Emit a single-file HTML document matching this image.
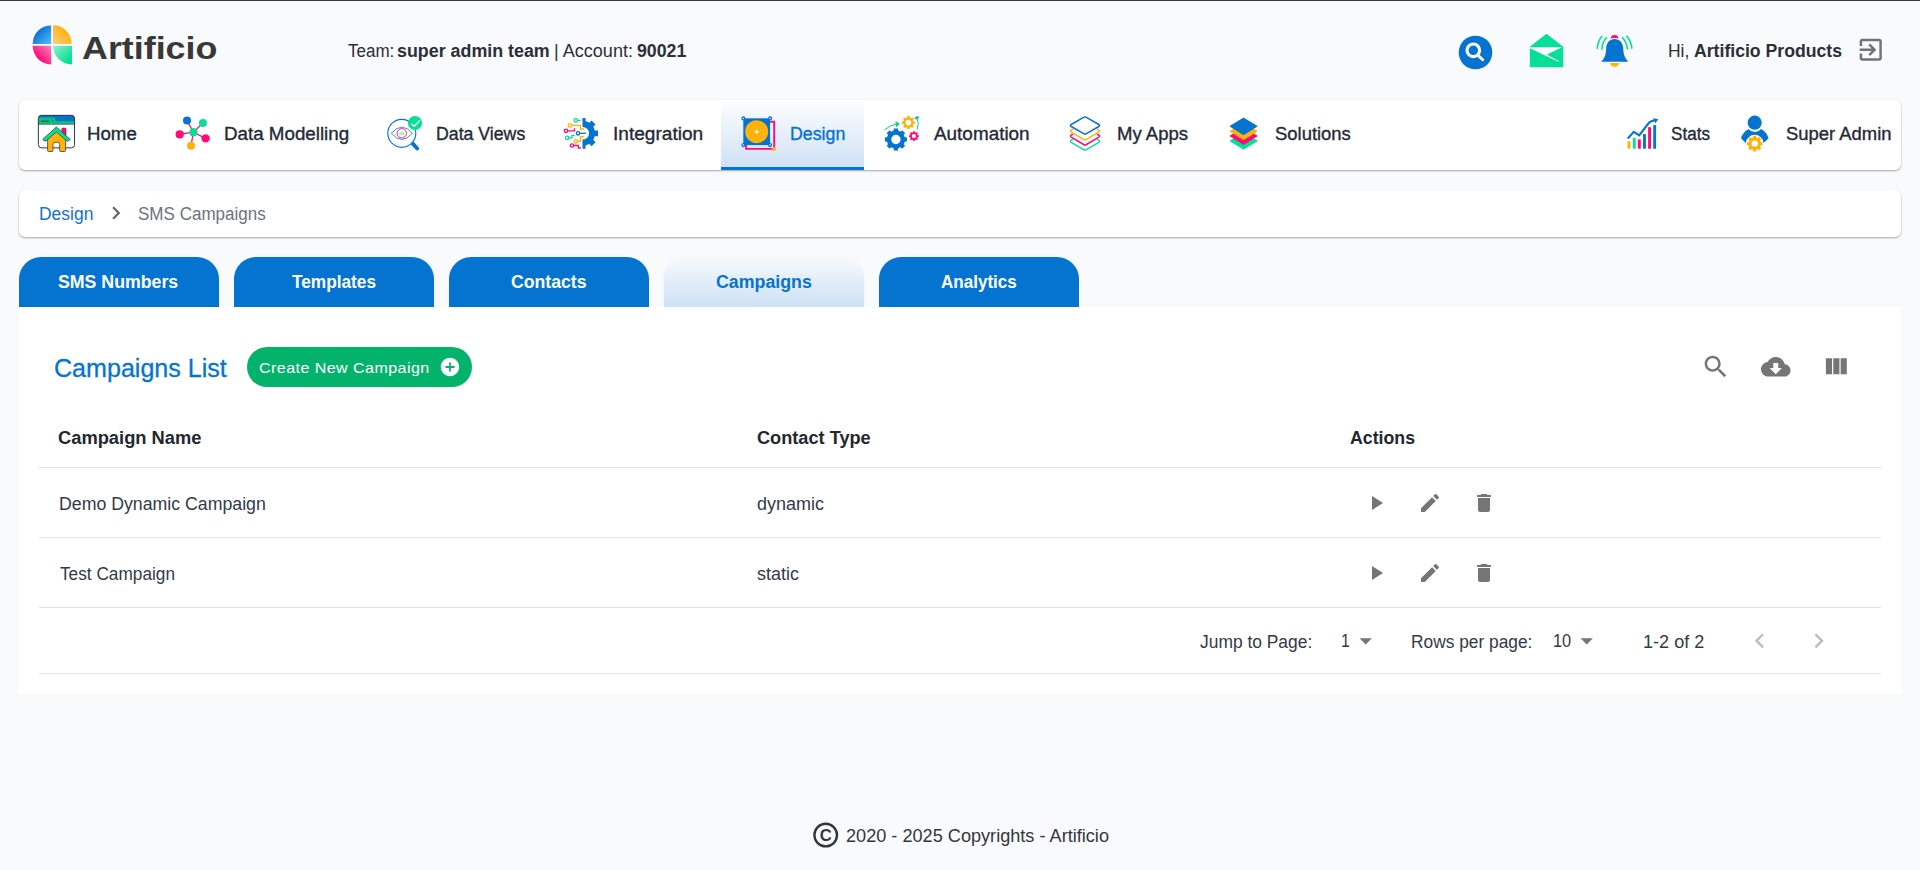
<!DOCTYPE html>
<html lang="en">
<head>
<meta charset="utf-8">
<title>Artificio - SMS Campaigns</title>
<style>
*{box-sizing:border-box;margin:0;padding:0}
html,body{width:1920px;height:870px;overflow:hidden}
body{background:#f9fafc;font-family:"Liberation Sans",sans-serif;color:#262b33;position:relative}
.topline{position:absolute;left:0;top:0;width:1920px;height:1px;background:#3a3a3a}
.t{position:absolute;white-space:nowrap;line-height:1;transform-origin:0 0}
.ic{position:absolute;overflow:visible}
.nav{position:absolute;left:19px;top:100px;width:1882px;height:70px;background:#fff;border-radius:6px;box-shadow:0 1px 2px rgba(50,50,60,.42)}
.nav .act{position:absolute;left:702px;top:0;width:143px;height:70px;background:linear-gradient(#fdfeff,#cfe1f4);border-bottom:3px solid #0474d0}
.bc{position:absolute;left:19px;top:190px;width:1882px;height:47px;background:#fff;border-radius:6px;box-shadow:0 1px 2px rgba(50,50,60,.42)}
.tab{position:absolute;top:257px;width:200px;height:50px;background:#0474d0;border-radius:22px 22px 0 0}
.tab.on{background:linear-gradient(#f7f9fc,#cde1f5);box-shadow:0 0 3px rgba(0,0,0,.05)}
.card{position:absolute;left:19px;top:307px;width:1882px;height:387px;background:#fff}
.hr{position:absolute;left:39px;width:1842px;height:1px;background:#e0e0e0}
.btn{position:absolute;left:247px;top:347px;width:225px;height:40px;border-radius:20px;background:#03b36c}
</style>
</head>
<body>
<div class="topline"></div>

<header>
<div class="t" id="brand" style="left:81.94px;top:31.66px;font-size:32px;color:#383838;font-weight:700;transform:scaleX(1.1201)">Artificio</div>
<div class="t" id="team1" style="left:348.00px;top:41.76px;font-size:18px;color:#2a2f38;transform:scaleX(0.9447)">Team:</div>
<div class="t" id="team2" style="left:396.82px;top:41.76px;font-size:18px;color:#2a2f38;font-weight:700;transform:scaleX(0.9914)">super admin team</div>
<div class="t" id="team3" style="left:553.99px;top:41.76px;font-size:18px;color:#2a2f38;transform:scaleX(1.0033)">| Account:</div>
<div class="t" id="team4" style="left:637.00px;top:41.76px;font-size:18px;color:#2a2f38;font-weight:700;transform:scaleX(0.9848)">90021</div>
<div class="t" id="hi1" style="left:1667.83px;top:41.56px;font-size:18px;color:#2a2f38;transform:scaleX(0.9688)">Hi,</div>
<div class="t" id="hi2" style="left:1693.82px;top:41.56px;font-size:18px;color:#2a2f38;font-weight:700;transform:scaleX(0.9801)">Artificio Products</div>
<svg class="ic" style="left:32px;top:24px" width="41" height="42" viewBox="32 24 41 42" >
<defs>
<linearGradient id="lg1" x1="0" y1="0" x2="1" y2="1"><stop offset=".25" stop-color="#0a6fd0"/><stop offset="1" stop-color="#4fc0f8"/></linearGradient>
<linearGradient id="lg2" x1="0" y1="1" x2="1" y2="0"><stop offset="0" stop-color="#f8cc85"/><stop offset=".7" stop-color="#ffb30a"/></linearGradient>
<linearGradient id="lg3" x1="1" y1="0" x2="0" y2="1"><stop offset="0" stop-color="#ff86bb"/><stop offset=".7" stop-color="#ff0a78"/></linearGradient>
<linearGradient id="lg4" x1="0" y1="0" x2="1" y2="1"><stop offset="0" stop-color="#93eed0"/><stop offset=".8" stop-color="#06e096"/></linearGradient>
</defs>
<path fill="url(#lg1)" d="M51.100 43.900V25.400A18.400 18.400 0 0 0 32.700 43.900Z"/>
<path fill="url(#lg2)" d="M53 43.900V25.200A18.700 18.700 0 0 1 71.700 43.900Z"/>
<path fill="url(#lg3)" d="M51.100 45.800H32.700A18.600 18.600 0 0 0 51.100 64.400Z"/>
<path fill="url(#lg4)" d="M53 45.800H72V64.500A19 19 0 0 1 53 45.800Z"/>
</svg>
<svg class="ic" style="left:1458px;top:35px" width="36" height="36" viewBox="1458 35 36 36" >
<circle cx="1475.500" cy="52.500" r="16.800" fill="#0474d0"/>
<circle cx="1473.300" cy="50.300" r="6.300" fill="none" stroke="#fff" stroke-width="3.100"/>
<path d="M1478.300 55.600L1482.700 59.700" stroke="#fff" stroke-width="2.900" stroke-linecap="round"/>
</svg>
<svg class="ic" style="left:1528px;top:32px" width="38" height="37" viewBox="1528 32 38 37" >
<path fill="#06e096" d="M1529.850 46.650L1546.500 33.700L1563.200 46.650V67.200H1529.850Z"/>
<path fill="#f9fafc" d="M1529.850 47.150H1562L1547 54.550L1559 61.300L1558.300 61.700L1529.850 48.200Z"/>
</svg>
<svg class="ic" style="left:1595px;top:33px" width="40" height="36" viewBox="1595 33 40 36" >
<circle cx="1614.600" cy="38.800" r="3.900" fill="#ff0a78"/>
<path fill="#f9fafc" d="M1608 39.600C1612 37.600 1617.500 37.600 1621.500 39.600V43H1608Z"/>
<path fill="#0474d0" d="M1614.600 39.100C1619.500 39.100 1623.100 42.800 1623.200 48.500C1623.300 54.500 1625 58.500 1628.400 61.800H1601.200C1604.500 58.500 1606.100 54.500 1606.200 48.500C1606.300 42.800 1609.700 39.100 1614.600 39.100Z"/>
<path fill="#ffb30a" d="M1609.800 63.100H1619.450C1618.800 65.500 1616.800 66.800 1614.600 66.800C1612.400 66.800 1610.500 65.500 1609.800 63.100Z"/>
<g fill="none" stroke="#06e096" stroke-width="1.600" stroke-linecap="round">
<path d="M1601.750 36.400Q1597.600 41.500 1597.300 48.200"/>
<path d="M1606.400 37.800Q1602.200 42.500 1601.900 49.300"/>
<path d="M1622.400 37.500Q1626.900 42.500 1627.350 49.050"/>
<path d="M1626.850 36.200Q1631.300 41.500 1631.800 48.200"/>
</g>
</svg>
<svg class="ic" style="left:1856.25px;top:35.10px" width="29.5" height="29.5" viewBox="0 0 24 24"><path fill="#737373" d="M10.090 15.590L11.500 17l5-5-5-5-1.410 1.410L12.670 11H3v2h9.670l-2.580 2.590zM19 3H5c-1.110 0-2 .9-2 2v4h2V5h14v14H5v-4H3v4c0 1.100.890 2 2 2h14c1.100 0 2-.9 2-2V5c0-1.100-.9-2-2-2z"/></svg>
</header>

<nav>
<div class="nav"><div class="act"></div></div>
<div class="t" id="n1" style="left:86.95px;top:124.51px;font-size:18px;color:#232a36;-webkit-text-stroke:0.35px #232a36;transform:scaleX(1.0373)">Home</div>
<div class="t" id="n2" style="left:223.94px;top:124.51px;font-size:18px;color:#232a36;-webkit-text-stroke:0.35px #232a36;transform:scaleX(1.0424)">Data Modelling</div>
<div class="t" id="n3" style="left:435.61px;top:124.51px;font-size:18px;color:#232a36;-webkit-text-stroke:0.35px #232a36;transform:scaleX(0.9837)">Data Views</div>
<div class="t" id="n4" style="left:612.92px;top:124.51px;font-size:18px;color:#232a36;-webkit-text-stroke:0.35px #232a36;transform:scaleX(1.0602)">Integration</div>
<div class="t" id="n5" style="left:790.01px;top:124.51px;font-size:18px;color:#0474d0;-webkit-text-stroke:0.35px #0474d0;transform:scaleX(0.9865)">Design</div>
<div class="t" id="n6" style="left:933.99px;top:124.51px;font-size:18px;color:#232a36;-webkit-text-stroke:0.35px #232a36;transform:scaleX(1.0501)">Automation</div>
<div class="t" id="n7" style="left:1116.95px;top:124.51px;font-size:18px;color:#232a36;-webkit-text-stroke:0.35px #232a36;transform:scaleX(1.0301)">My Apps</div>
<div class="t" id="n8" style="left:1274.99px;top:124.51px;font-size:18px;color:#232a36;-webkit-text-stroke:0.35px #232a36;transform:scaleX(1.0239)">Solutions</div>
<div class="t" id="n9" style="left:1671.05px;top:124.51px;font-size:18px;color:#232a36;-webkit-text-stroke:0.35px #232a36;transform:scaleX(0.9500)">Stats</div>
<div class="t" id="n10" style="left:1785.97px;top:124.51px;font-size:18px;color:#232a36;-webkit-text-stroke:0.35px #232a36;transform:scaleX(1.0237)">Super Admin</div>
<svg class="ic" style="left:37px;top:114px" width="39" height="39" viewBox="37 114 39 39" >
<defs><clipPath id="hc"><rect x="38.350" y="115.350" width="36.200" height="32.500" rx="3.200"/></clipPath></defs>
<rect x="38.350" y="115.350" width="36.200" height="32.500" rx="3.200" fill="#fff"/>
<g clip-path="url(#hc)">
<rect x="38" y="115" width="37" height="9.200" fill="#05c47e"/>
<path fill="#0474d0" d="M38 115H75V121.300H56L54.500 117.400H38Z"/>
<rect x="38" y="123.900" width="37" height=".6" fill="#3b3b4f"/>
<rect x="41" y="120.700" width="8" height="1" fill="#2d3a4a"/>
<path d="M51.500 119.500l1.800 1.800" stroke="#2d3a4a" stroke-width=".9"/>
<circle cx="65.400" cy="118.500" r=".55" fill="#2d3a4a"/><circle cx="68.100" cy="118.500" r=".55" fill="#2d3a4a"/><circle cx="70.700" cy="118.500" r=".55" fill="#2d3a4a"/>
</g>
<rect x="38.350" y="115.350" width="36.200" height="32.500" rx="3.200" fill="none" stroke="#33344a" stroke-width="1"/>
<path fill="#ff0a78" stroke="#4a2a3a" stroke-width=".6" d="M61.800 133V129.200Q61.800 128.100 62.900 128.100H64.900Q66 128.100 66 129.200V136.500Z"/>
<path fill="#ffb30a" stroke="#4a3a2a" stroke-width=".8" d="M47.600 138.500L56.400 130.300L65.600 138.500V150.500Q65.600 151.500 64.600 151.500H60.600Q59.600 151.500 59.600 150.500V144.300Q59.600 142.300 57.600 142.300H55Q53 142.300 53 144.300V150.500Q53 151.500 52 151.500H48.600Q47.600 151.500 47.600 150.500Z"/>
<path fill="#06e096" stroke="#2f4a45" stroke-width=".8" stroke-linejoin="round" d="M56.400 127L70 139.300L68.600 141H66.800L56.400 131.900L46 141H44.200L42.800 139.300Z"/>
</svg>
<svg class="ic" style="left:175px;top:115px" width="36" height="36" viewBox="175 115 36 36" >
<g stroke="#ff0a78" stroke-width="1.250">
<path d="M193.400 132.200L187 120.400M193.400 132.200L202.900 122.900M193.400 132.200L179.700 134.400M193.400 132.200L205.600 138.400M193.400 132.200L191 145.800"/>
</g>
<circle cx="187" cy="120.400" r="4" fill="#0474d0"/>
<circle cx="202.900" cy="122.900" r="4" fill="#06e096"/>
<circle cx="179.700" cy="134.400" r="4.100" fill="#ff0a78"/>
<circle cx="205.600" cy="138.400" r="4.200" fill="#ff0a78"/>
<circle cx="191" cy="145.800" r="4" fill="#ffb30a"/>
<circle cx="193.400" cy="132.200" r="4.200" fill="#06e096"/>
</svg>
<svg class="ic" style="left:386px;top:115px" width="38" height="37" viewBox="386 115 38 37" >
<path d="M412.300 143.100L417.200 148.500" stroke="#0474d0" stroke-width="3.800" stroke-linecap="round"/>
<circle cx="401.800" cy="133.300" r="14" fill="#fff" stroke="#0474d0" stroke-width="1.150"/>
<path d="M391.300 133.300Q401.800 121 412.400 133.300Q401.800 145.600 391.300 133.300Z" fill="none" stroke="#0474d0" stroke-width=".8"/>
<circle cx="401.800" cy="133.300" r="4.700" fill="none" stroke="#ff0a78" stroke-width=".9"/>
<path d="M400 135.300v-2.400M401.800 135.300v-3.600" stroke="#06e096" stroke-width=".9" opacity=".8"/>
<path d="M403.600 135.300v-3" stroke="#ffb30a" stroke-width=".9"/>
<circle cx="415" cy="123.100" r="7.100" fill="#06e096"/>
<path d="M411.500 123.900L414.300 126.200L419.700 120.500" fill="none" stroke="#fff" stroke-width="1.400"/>
</svg>
<svg class="ic" style="left:563px;top:116px" width="37" height="35" viewBox="563 116 37 35" >
<defs><clipPath id="ig"><rect x="582.500" y="116" width="20" height="35"/></clipPath></defs>
<g clip-path="url(#ig)"><path fill="#0474d0" fill-rule="evenodd" d="M594.76 130.41L598.04 130.45L598.04 136.15L594.76 136.19A12.4 12.4 0 0 1 593.27 139.78L595.56 142.13L591.53 146.16L589.18 143.87A12.4 12.4 0 0 1 585.59 145.36L585.55 148.64L579.85 148.64L579.81 145.36A12.4 12.4 0 0 1 576.22 143.87L573.87 146.16L569.84 142.13L572.13 139.78A12.4 12.4 0 0 1 570.64 136.19L567.36 136.15L567.36 130.45L570.64 130.41A12.4 12.4 0 0 1 572.13 126.82L569.84 124.47L573.87 120.44L576.22 122.73A12.4 12.4 0 0 1 579.81 121.24L579.85 117.96L585.55 117.96L585.59 121.24A12.4 12.4 0 0 1 589.18 122.73L591.53 120.44L595.56 124.47L593.27 126.82A12.4 12.4 0 0 1 594.76 130.41ZM576.400 133.300a6.300 6.300 0 1 0 12.600 0a6.300 6.300 0 1 0 -12.600 0Z"/></g>
<g fill="none" stroke-width="1.300">
<g stroke="#06e096"><circle cx="575.800" cy="120.400" r="1.700"/><path d="M577.500 120.400H580.800"/></g>
<g stroke="#ffb30a"><circle cx="569.800" cy="125.400" r="1.700"/><path d="M571.500 125.400H580.500V129H583.900"/></g>
<g stroke="#ff0a78"><circle cx="566" cy="130.800" r="1.700"/><path d="M567.700 130.800H574.500V128.200"/></g>
<g stroke="#0474d0"><circle cx="578" cy="133.300" r="1.700"/><path d="M579.700 133.300H585.900"/></g>
<g stroke="#06e096"><circle cx="567.200" cy="137.900" r="1.700"/><path d="M568.900 137.900H572V135.300H574.700"/></g>
<g stroke="#ffb30a"><circle cx="575.800" cy="141.300" r="1.700"/><path d="M577.500 141.300H580.500V136.700H583.900"/></g>
<g stroke="#ff0a78"><circle cx="572" cy="145.500" r="1.700"/><path d="M573.700 145.500H578.300V148H580.900"/></g>
</g>
</svg>
<svg class="ic" style="left:740px;top:116px" width="37" height="36" viewBox="740 116 37 36" >
<path d="M770.100 121.750H774.200V148.900H746.100V145.100" fill="none" stroke="#ff0a78" stroke-width="1.900"/>
<rect x="743.300" y="118.300" width="26.800" height="26.800" fill="#0474d0"/>
<circle cx="756.700" cy="131.700" r="11.500" fill="#ffb30a"/>
<path d="M754.400 131.700H759M756.700 129.400V134" stroke="#fff" stroke-width="1.100"/>
<g fill="#fff" stroke="#0474d0" stroke-width="1.300"><circle cx="743.400" cy="118.400" r="1.400"/><circle cx="770.100" cy="118.400" r="1.400"/><circle cx="743.400" cy="145.100" r="1.400"/><circle cx="770.100" cy="145.100" r="1.400"/></g>
<circle cx="773.900" cy="148.900" r="2" fill="#ffb30a"/>
</svg>
<svg class="ic" style="left:883px;top:115px" width="38" height="37" viewBox="883 115 38 37" >
<path fill="#0474d0" fill-rule="evenodd" d="M904.73 137.26L906.90 137.34L906.90 141.56L904.73 141.64A9.1 9.1 0 0 1 903.70 144.14L905.17 145.73L902.18 148.72L900.59 147.25A9.1 9.1 0 0 1 898.09 148.28L898.01 150.45L893.79 150.45L893.71 148.28A9.1 9.1 0 0 1 891.21 147.25L889.62 148.72L886.63 145.73L888.10 144.14A9.1 9.1 0 0 1 887.07 141.64L884.90 141.56L884.90 137.34L887.07 137.26A9.1 9.1 0 0 1 888.10 134.76L886.63 133.17L889.62 130.18L891.21 131.65A9.1 9.1 0 0 1 893.71 130.62L893.79 128.45L898.01 128.45L898.09 130.62A9.1 9.1 0 0 1 900.59 131.65L902.18 130.18L905.17 133.17L903.70 134.76A9.1 9.1 0 0 1 904.73 137.26ZM891.20 139.45a4.7 4.7 0 1 0 9.4 0a4.7 4.7 0 1 0 -9.4 0Z"/>
<path fill="#ffb30a" fill-rule="evenodd" d="M913.46 121.39L914.89 121.39L914.89 123.81L913.46 123.81A5.2 5.2 0 0 1 912.83 125.32L913.84 126.34L912.14 128.04L911.12 127.03A5.2 5.2 0 0 1 909.61 127.66L909.61 129.09L907.19 129.09L907.19 127.66A5.2 5.2 0 0 1 905.68 127.03L904.66 128.04L902.96 126.34L903.97 125.32A5.2 5.2 0 0 1 903.34 123.81L901.91 123.81L901.91 121.39L903.34 121.39A5.2 5.2 0 0 1 903.97 119.88L902.96 118.86L904.66 117.16L905.68 118.17A5.2 5.2 0 0 1 907.19 117.54L907.19 116.11L909.61 116.11L909.61 117.54A5.2 5.2 0 0 1 911.12 118.17L912.14 117.16L913.84 118.86L912.83 119.88A5.2 5.2 0 0 1 913.46 121.39ZM905.60 122.60a2.8 2.8 0 1 0 5.6 0a2.8 2.8 0 1 0 -5.6 0Z"/>
<path fill="#ff0a78" fill-rule="evenodd" d="M917.69 135.19L918.82 135.22L918.82 136.98L917.69 137.01A3.9 3.9 0 0 1 917.23 138.14L918.00 138.96L916.76 140.20L915.94 139.43A3.9 3.9 0 0 1 914.81 139.89L914.78 141.02L913.02 141.02L912.99 139.89A3.9 3.9 0 0 1 911.86 139.43L911.04 140.20L909.80 138.96L910.57 138.14A3.9 3.9 0 0 1 910.11 137.01L908.98 136.98L908.98 135.22L910.11 135.19A3.9 3.9 0 0 1 910.57 134.06L909.80 133.24L911.04 132.00L911.86 132.77A3.9 3.9 0 0 1 912.99 132.31L913.02 131.18L914.78 131.18L914.81 132.31A3.9 3.9 0 0 1 915.94 132.77L916.76 132.00L918.00 133.24L917.23 134.06A3.9 3.9 0 0 1 917.69 135.19ZM911.80 136.10a2.1 2.1 0 1 0 4.2 0a2.1 2.1 0 1 0 -4.2 0Z"/>
<g fill="none" stroke="#10c98a" stroke-width="1" stroke-linecap="round" stroke-linejoin="round">
<path d="M884.700 129.600Q890.500 124.600 897.500 124"/><path fill="#10c98a" d="M896.200 122L899 123.800L896.800 126.400Z"/>
<path d="M917.200 129Q919.600 123.500 917.200 118"/><path fill="#10c98a" d="M915 118.400L916.600 116.600L919 117.200L917.300 118.600Z"/>
</g>
</svg>
<svg class="ic" style="left:1068px;top:115px" width="34" height="37" viewBox="1068 115 34 37" >
<g fill="none" stroke-width="1.500" stroke-linejoin="round" stroke-linecap="round">
<path stroke="#06e096" d="M1072.400 139.600L1071.200 140.300Q1069.600 141.300 1071.200 142.300L1083.600 149.600Q1085 150.400 1086.400 149.600L1098.800 142.300Q1100.400 141.300 1098.800 140.300L1097.600 139.600"/>
<path stroke="#ff0a78" d="M1072.400 134.500L1071.200 135.200Q1069.600 136.200 1071.200 137.200L1083.600 144.500Q1085 145.300 1086.400 144.500L1098.800 137.200Q1100.400 136.200 1098.800 135.200L1097.600 134.500"/>
<path stroke="#ffb30a" d="M1072.400 129.400L1071.200 130.100Q1069.600 131.100 1071.200 132.100L1083.600 139.400Q1085 140.200 1086.400 139.400L1098.800 132.100Q1100.400 131.100 1098.800 130.100L1097.600 129.400"/>
<path stroke="#0474d0" d="M1083.600 117.400Q1085 116.600 1086.400 117.400L1098.800 124.500Q1100.400 125.500 1098.800 126.500L1086.400 133.700Q1085 134.500 1083.600 133.700L1071.200 126.500Q1069.600 125.500 1071.200 124.500Z"/>
</g>
</svg>
<svg class="ic" style="left:1228px;top:116px" width="32" height="35" viewBox="1228 116 32 35" ><path fill="#06e096" stroke="#06e096" stroke-width="1.200" stroke-linejoin="round" d="M1243.6 132.70000000000002L1256.8 140.9L1243.6 149.1L1230.3999999999999 140.9Z"/><path fill="#ff0a78" stroke="#ff0a78" stroke-width="1.200" stroke-linejoin="round" d="M1243.6 127.89999999999999L1256.8 136.1L1243.6 144.29999999999998L1230.3999999999999 136.1Z"/><path fill="#ffb30a" stroke="#ffb30a" stroke-width="1.200" stroke-linejoin="round" d="M1243.6 122.99999999999999L1256.8 131.2L1243.6 139.39999999999998L1230.3999999999999 131.2Z"/><path fill="#0474d0" stroke="#0474d0" stroke-width="1.200" stroke-linejoin="round" d="M1243.6 118.14999999999999L1256.8 126.35L1243.6 134.54999999999998L1230.3999999999999 126.35Z"/></svg>
<svg class="ic" style="left:1625px;top:117px" width="36" height="33" viewBox="1625 117 36 33" ><rect x="1627.5" y="141.3" width="2.900" height="7.40" fill="#ffb30a"/><rect x="1632.8" y="137.9" width="2.900" height="10.80" fill="#06e096"/><rect x="1637.9" y="139.4" width="2.900" height="9.30" fill="#ff0a78"/><rect x="1643" y="134.1" width="2.900" height="14.60" fill="#0474d0"/><rect x="1648.1" y="127.2" width="2.900" height="21.50" fill="#ff0a78"/><rect x="1653.2" y="125.1" width="2.900" height="23.60" fill="#0474d0"/><path d="M1627.800 138.500L1633.800 131.900L1639.200 135.300L1649.300 122.300Q1651.500 120.700 1655.500 120.200" fill="none" stroke="#0474d0" stroke-width="2.100" stroke-linejoin="miter"/><path fill="#0474d0" d="M1653 118.200L1658.300 119.300L1655.300 123.300Z"/></svg>
<svg class="ic" style="left:1740px;top:114px" width="30" height="39" viewBox="1740 114 30 39" >
<circle cx="1754.700" cy="122.700" r="7.100" fill="#0474d0"/>
<path fill="#0474d0" fill-rule="evenodd" d="M1748.600 129.100A7.900 7.900 0 0 0 1761 129.100C1764.500 130.800 1767.500 134.500 1768.600 138.300L1763.650 142.900A9 9 0 0 0 1745.750 142.900L1741 138.300C1742 134.500 1745 130.800 1748.400 129.300Z"/>
<path fill="#ffb30a" fill-rule="evenodd" d="M1760.83 142.13L1762.57 142.14L1762.57 145.06L1760.83 145.07A6.3 6.3 0 0 1 1760.07 146.89L1761.30 148.13L1759.23 150.20L1757.99 148.97A6.3 6.3 0 0 1 1756.17 149.73L1756.16 151.47L1753.24 151.47L1753.23 149.73A6.3 6.3 0 0 1 1751.41 148.97L1750.17 150.20L1748.10 148.13L1749.33 146.89A6.3 6.3 0 0 1 1748.57 145.07L1746.83 145.06L1746.83 142.14L1748.57 142.13A6.3 6.3 0 0 1 1749.33 140.31L1748.10 139.07L1750.17 137.00L1751.41 138.23A6.3 6.3 0 0 1 1753.23 137.47L1753.24 135.73L1756.16 135.73L1756.17 137.47A6.3 6.3 0 0 1 1757.99 138.23L1759.23 137.00L1761.30 139.07L1760.07 140.31A6.3 6.3 0 0 1 1760.83 142.13ZM1751.50 143.60a3.2 3.2 0 1 0 6.4 0a3.2 3.2 0 1 0 -6.4 0Z"/>
</svg>
</nav>

<main>
<section>
<div class="bc"></div>
<div class="t" id="bc1" style="left:38.83px;top:204.66px;font-size:18px;color:#1273d0;transform:scaleX(0.9704)">Design</div>
<div class="t" id="bc2" style="left:137.62px;top:204.66px;font-size:18px;color:#6c737c;transform:scaleX(0.9463)">SMS Campaigns</div>
<svg class="ic" style="left:102.70px;top:200.30px" width="26" height="26" viewBox="0 0 24 24"><path fill="#666" d="M10 6L8.590 7.410 13.170 12l-4.580 4.590L10 18l6-6z"/></svg>
</section>

<section>
<div class="tab" style="left:19px"></div>
<div class="tab" style="left:234px"></div>
<div class="tab" style="left:449px"></div>
<div class="tab on" style="left:664px"></div>
<div class="tab" style="left:879px"></div>
<div class="t" id="tab1" style="left:57.99px;top:274.09px;font-size:17.5px;color:#fff;font-weight:700;transform:scaleX(1.0128)">SMS Numbers</div>
<div class="t" id="tab2" style="left:292.00px;top:274.09px;font-size:17.5px;color:#fff;font-weight:700;transform:scaleX(0.9853)">Templates</div>
<div class="t" id="tab3" style="left:510.79px;top:274.09px;font-size:17.5px;color:#fff;font-weight:700;transform:scaleX(1.0095)">Contacts</div>
<div class="t" id="tab4" style="left:715.98px;top:274.09px;font-size:17.5px;color:#0474d0;font-weight:700;transform:scaleX(1.0161)">Campaigns</div>
<div class="t" id="tab5" style="left:941.02px;top:274.09px;font-size:17.5px;color:#fff;font-weight:700;transform:scaleX(0.9740)">Analytics</div>
</section>

<section>
<div class="card"></div>
<div class="btn"></div>
<div class="hr" style="top:467px"></div>
<div class="hr" style="top:537px"></div>
<div class="hr" style="top:607px"></div>
<div class="hr" style="top:673px"></div>
<div class="t" id="title" style="left:53.99px;top:355.84px;font-size:25px;color:#0474d0;-webkit-text-stroke:0.3px #0474d0;transform:scaleX(1.0030)">Campaigns List</div>
<div class="t" id="btn" style="left:258.92px;top:360.69px;font-size:14.9px;color:#fff;transform:scaleX(1.0785);letter-spacing:.4px">Create New Campaign</div>
<div class="t" id="th1" style="left:57.76px;top:430.39px;font-size:17.5px;color:#23272e;font-weight:700;transform:scaleX(1.0463)">Campaign Name</div>
<div class="t" id="th2" style="left:756.77px;top:430.39px;font-size:17.5px;color:#23272e;font-weight:700;transform:scaleX(1.0379)">Contact Type</div>
<div class="t" id="th3" style="left:1349.58px;top:430.39px;font-size:17.5px;color:#23272e;font-weight:700;transform:scaleX(1.0128)">Actions</div>
<div class="t" id="r1a" style="left:58.78px;top:496.19px;font-size:17.5px;color:#333a47;transform:scaleX(1.0124)">Demo Dynamic Campaign</div>
<div class="t" id="r1b" style="left:757.39px;top:496.19px;font-size:17.5px;color:#333a47;transform:scaleX(1.0282)">dynamic</div>
<div class="t" id="r2a" style="left:59.80px;top:566.19px;font-size:17.5px;color:#333a47;transform:scaleX(0.9854)">Test Campaign</div>
<div class="t" id="r2b" style="left:757.39px;top:566.19px;font-size:17.5px;color:#333a47;transform:scaleX(1.0250)">static</div>
<div class="t" id="p1" style="left:1200.20px;top:633.80px;font-size:17.6px;color:#333a47;transform:scaleX(0.9893)">Jump to Page:</div>
<div class="t" id="p2" style="left:1341.40px;top:632.90px;font-size:17.6px;color:#333a47;transform:scaleX(0.9000)">1</div>
<div class="t" id="p3" style="left:1410.82px;top:633.80px;font-size:17.6px;color:#333a47;transform:scaleX(0.9851)">Rows per page:</div>
<div class="t" id="p4" style="left:1553.08px;top:632.90px;font-size:17.6px;color:#333a47;transform:scaleX(0.9279)">10</div>
<div class="t" id="p5" style="left:1642.55px;top:633.80px;font-size:17.6px;color:#333a47;transform:scaleX(1.0268)">1-2 of 2</div>
<svg class="ic" style="left:439.40px;top:355.60px" width="22" height="22" viewBox="0 0 24 24"><path fill="#fff" d="M12 2C6.480 2 2 6.480 2 12s4.480 10 10 10 10-4.480 10-10S17.520 2 12 2zm5 11h-4v4h-2v-4H7v-2h4V7h2v4h4v2z"/></svg>
<svg class="ic" style="left:1701.15px;top:352.25px" width="29.5" height="29.5" viewBox="0 0 24 24"><path fill="#757575" d="M15.5 14h-.79l-.28-.27C15.41 12.59 16 11.11 16 9.5 16 5.91 13.09 3 9.5 3S3 5.91 3 9.5 5.91 16 9.5 16c1.61 0 3.09-.59 4.23-1.57l.27.28v.79l5 4.99L20.49 19l-4.99-5zm-6 0C7.01 14 5 11.99 5 9.5S7.01 5 9.5 5 14 7.01 14 9.5 11.99 14 9.5 14z"/></svg>
<svg class="ic" style="left:1761.25px;top:352.25px" width="29.5" height="29.5" viewBox="0 0 24 24"><path fill="#757575" d="M19.35 10.04C18.67 6.59 15.64 4 12 4 9.11 4 6.6 5.64 5.35 8.04 2.34 8.36 0 10.91 0 14c0 3.31 2.69 6 6 6h13c2.76 0 5-2.24 5-5 0-2.64-2.05-4.78-4.65-4.96zM17 13l-5 5-5-5h3V9h4v4h3z"/></svg>
<svg class="ic" style="left:1821.25px;top:352.25px" width="29.5" height="29.5" viewBox="0 0 24 24"><path fill="#757575" d="M10 18h5V5h-5v13zm-6 0h5V5H4v13zM16 5v13h5V5h-5z"/></svg>
<svg class="ic" style="left:1364.00px;top:491.00px" width="24" height="24" viewBox="0 0 24 24"><path fill="#757575" d="M8 5v14l11-7z"/></svg>
<svg class="ic" style="left:1418.00px;top:491.00px" width="24" height="24" viewBox="0 0 24 24"><path fill="#757575" d="M3 17.25V21h3.75L17.81 9.94l-3.75-3.75L3 17.25zM20.71 7.04c.39-.39.39-1.02 0-1.41l-2.34-2.34c-.39-.39-1.02-.39-1.41 0l-1.83 1.83 3.75 3.75 1.83-1.83z"/></svg>
<svg class="ic" style="left:1472.00px;top:491.00px" width="24" height="24" viewBox="0 0 24 24"><path fill="#757575" d="M6 19c0 1.1.9 2 2 2h8c1.1 0 2-.9 2-2V7H6v12zM19 4h-3.500l-1-1h-5l-1 1H5v2h14V4z"/></svg>
<svg class="ic" style="left:1364.00px;top:561.00px" width="24" height="24" viewBox="0 0 24 24"><path fill="#757575" d="M8 5v14l11-7z"/></svg>
<svg class="ic" style="left:1418.00px;top:561.00px" width="24" height="24" viewBox="0 0 24 24"><path fill="#757575" d="M3 17.25V21h3.75L17.81 9.94l-3.75-3.75L3 17.25zM20.71 7.04c.39-.39.39-1.02 0-1.41l-2.34-2.34c-.39-.39-1.02-.39-1.41 0l-1.83 1.83 3.75 3.75 1.83-1.83z"/></svg>
<svg class="ic" style="left:1472.00px;top:561.00px" width="24" height="24" viewBox="0 0 24 24"><path fill="#757575" d="M6 19c0 1.1.9 2 2 2h8c1.1 0 2-.9 2-2V7H6v12zM19 4h-3.500l-1-1h-5l-1 1H5v2h14V4z"/></svg>
<svg class="ic" style="left:1351.15px;top:626.15px" width="29.5" height="29.5" viewBox="0 0 24 24"><path fill="#757575" d="M7 10l5 5 5-5z"/></svg>
<svg class="ic" style="left:1572.45px;top:626.15px" width="29.5" height="29.5" viewBox="0 0 24 24"><path fill="#757575" d="M7 10l5 5 5-5z"/></svg>
<svg class="ic" style="left:1744.55px;top:625.95px" width="29.5" height="29.5" viewBox="0 0 24 24"><path fill="#bdbdbd" d="M15.41 7.41L14 6l-6 6 6 6 1.41-1.410L10.830 12z"/></svg>
<svg class="ic" style="left:1804.45px;top:625.95px" width="29.5" height="29.5" viewBox="0 0 24 24"><path fill="#bdbdbd" d="M10 6L8.590 7.410 13.170 12l-4.580 4.590L10 18l6-6z"/></svg>
</section>
</main>

<footer>
<div class="t" id="foot" style="left:845.80px;top:826.56px;font-size:18px;color:#33373d;transform:scaleX(1.0070)">2020 - 2025 Copyrights - Artificio</div>
<svg class="ic" style="left:811px;top:820px" width="30" height="30" viewBox="811 820 30 30"><circle cx="825.700" cy="835.100" r="11.300" fill="none" stroke="#33373d" stroke-width="2.400"/><text x="825.600" y="841.100" text-anchor="middle" font-family="Liberation Sans, sans-serif" font-weight="700" font-size="16.500" fill="#33373d">C</text></svg>
</footer>
</body>
</html>
